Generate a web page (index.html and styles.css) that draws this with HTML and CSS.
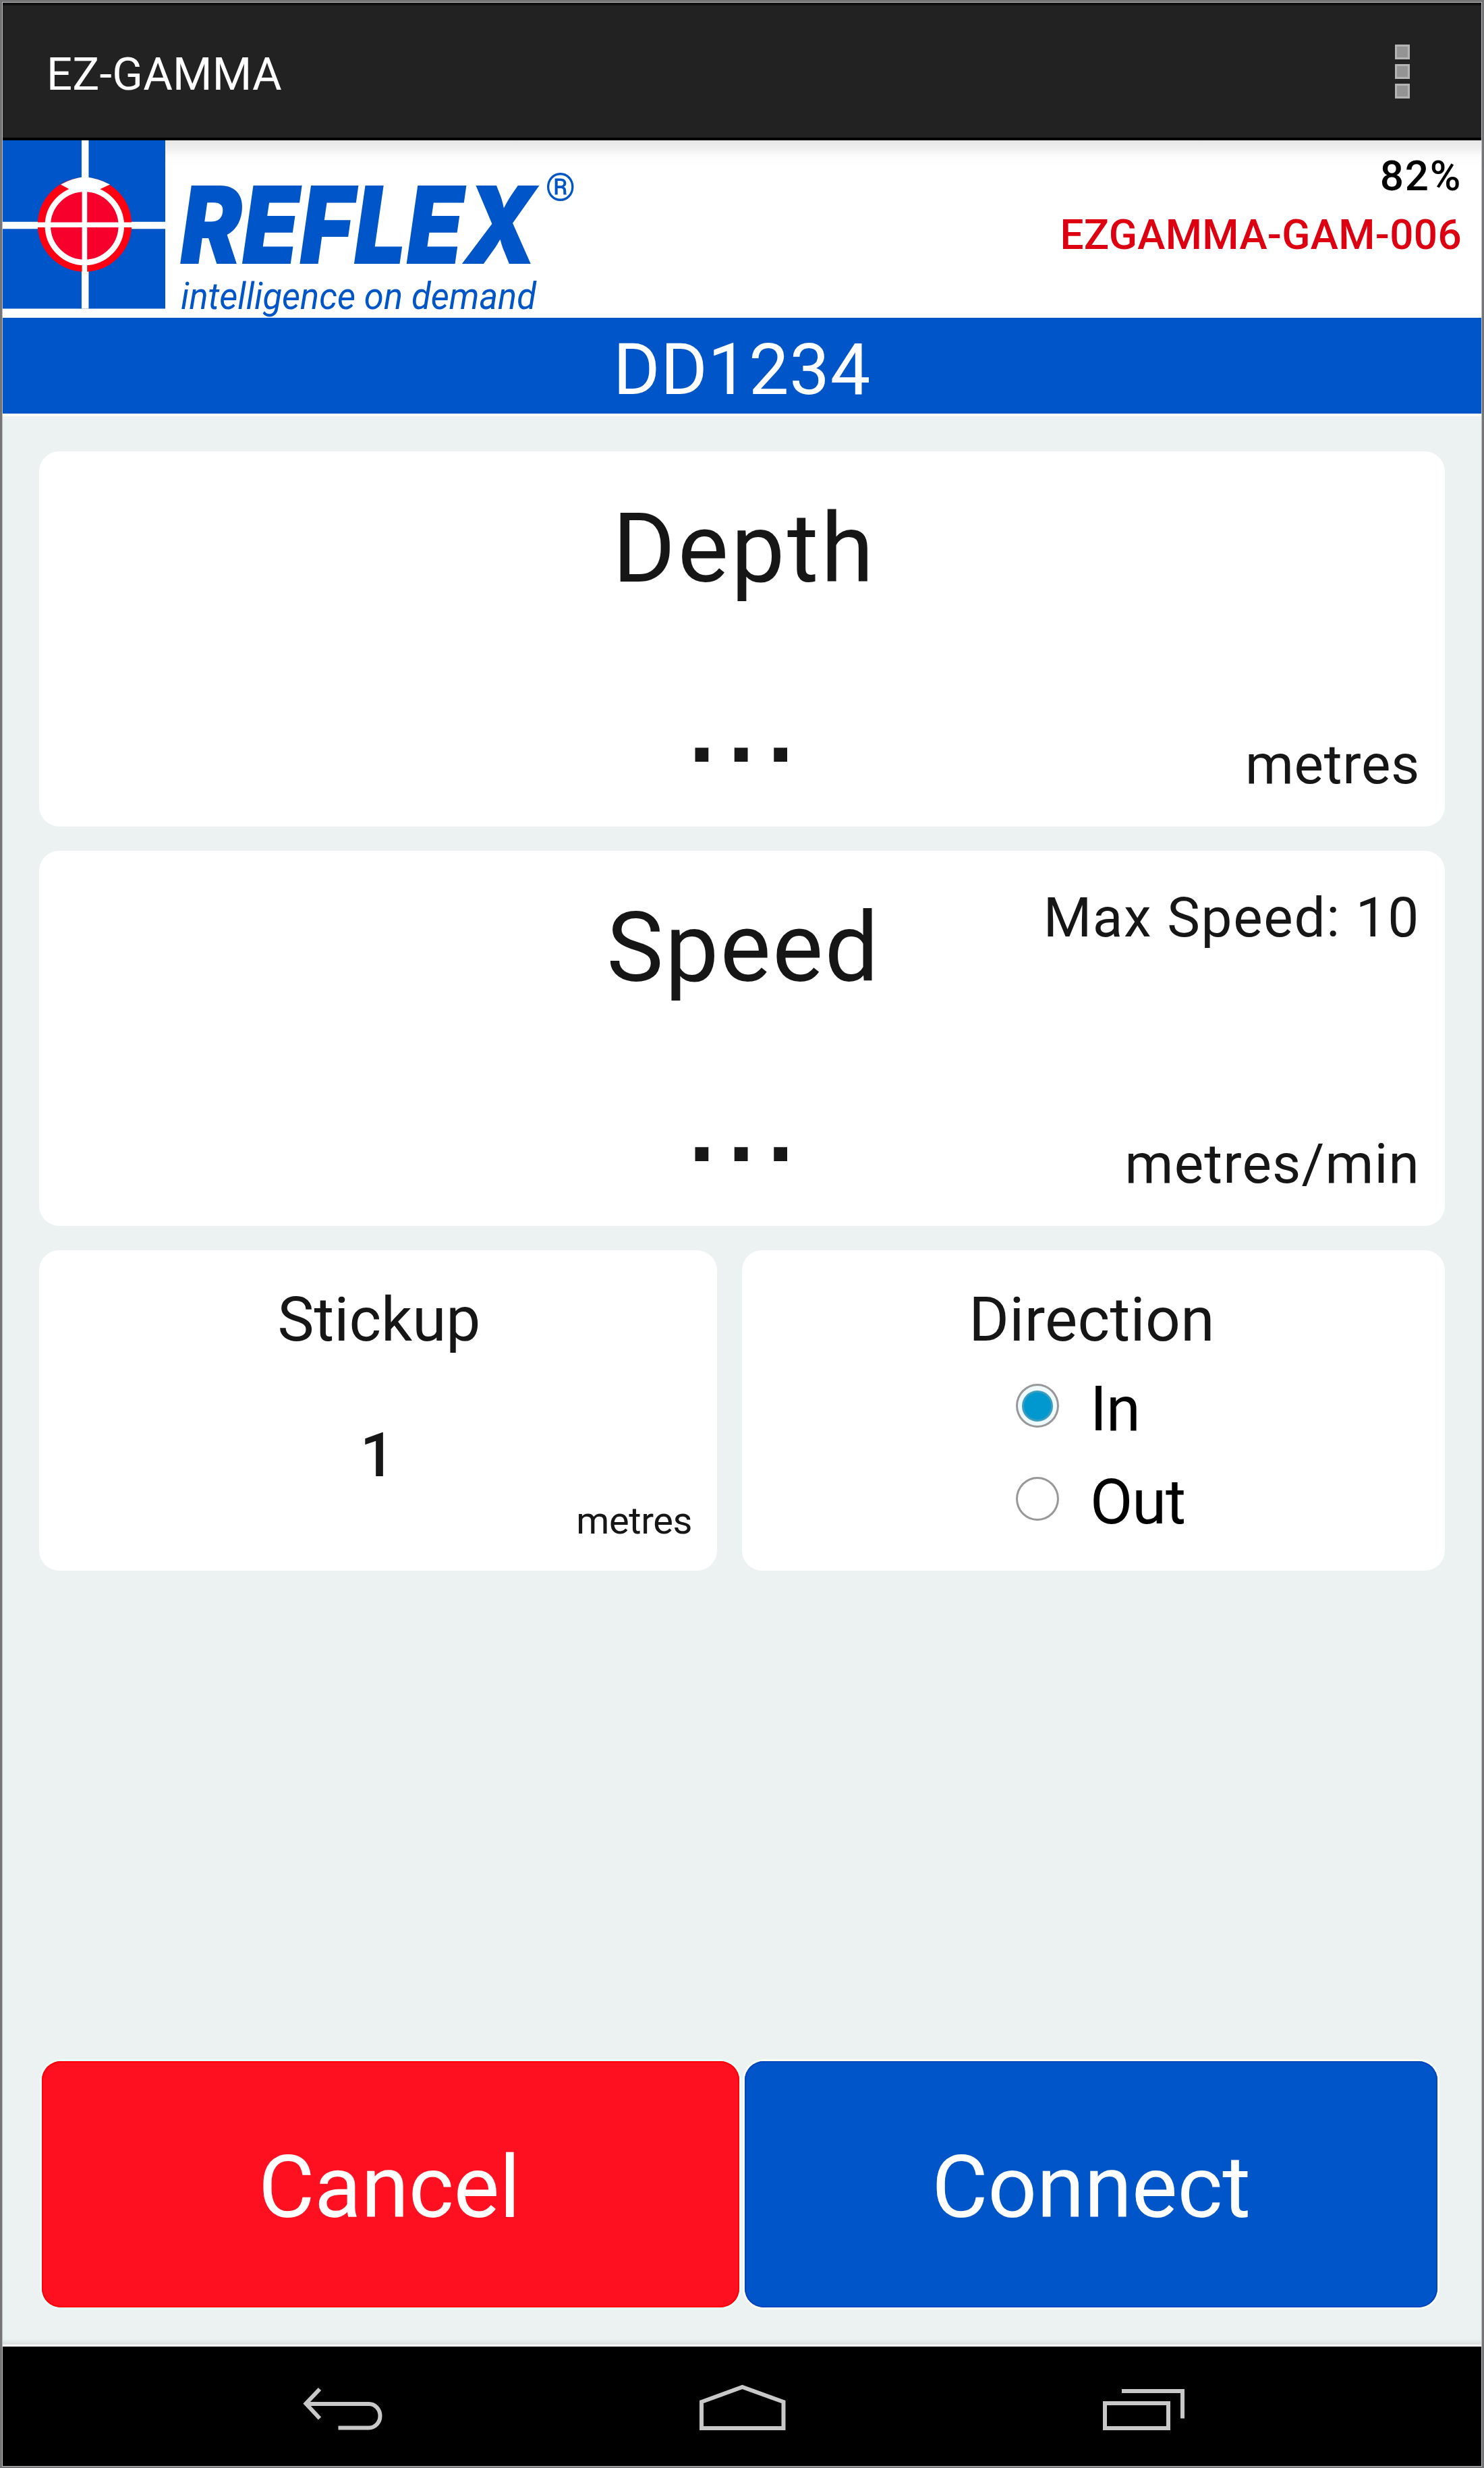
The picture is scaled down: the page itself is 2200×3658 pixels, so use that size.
FILE: index.html
```html
<!DOCTYPE html>
<html lang="en">
<head>
<meta charset="utf-8">
<title>EZ-GAMMA</title>
<link rel="stylesheet" href="styles.css">
</head>
<body>
<div class="device">
  <div class="screen">
    <header class="action-bar">
      <h1 class="app-name">EZ-GAMMA</h1>
      <div class="overflow"><i></i><i></i><i></i></div>
    </header>

    <section class="brand">
      <svg class="logo" viewBox="4 208 866 263" role="img" aria-label="REFLEX intelligence on demand">
        <rect x="4" y="208" width="241" height="249.500" fill="#0055c8"/>
        <path d="M126.200 208V457.500M4 334H245" stroke="#fff" stroke-width="10.500"/>
        <circle cx="125.500" cy="333" r="69.800" fill="#ff0012"/>
        <path d="M90 273.500Q107 264 125.500 262Q145 264 163 273.500L149 280Q125 292 102 280Z" fill="#fff"/>
        <circle cx="125.300" cy="334.500" r="54.500" fill="#f8002c" stroke="#fff" stroke-width="8.500"/>
        <path d="M125.400 262V405M55 333.300H197" stroke="#fff" stroke-width="7.600"/>
        <text class="logo-name" x="267" y="390.500" textLength="529" lengthAdjust="spacingAndGlyphs">REFLEX</text>
        <text class="logo-reg" x="808.500" y="296.500">®</text>
        <text class="logo-tag" x="268" y="457.500" textLength="527" lengthAdjust="spacingAndGlyphs">intelligence on demand</text>
      </svg>
      <div class="status">
        <span class="battery">82%</span>
        <span class="tool-id">EZGAMMA-GAM-006</span>
      </div>
    </section>

    <h2 class="hole-id">DD1234</h2>

    <main class="content">
      <section class="card">
        <h3 class="title title-depth">Depth</h3>
        <span class="reading">...</span>
        <span class="unit">metres</span>
      </section>
      <section class="card">
        <h3 class="title title-speed">Speed</h3>
        <span class="limit">Max Speed: 10</span>
        <span class="reading">...</span>
        <span class="unit unit-rate">metres/min</span>
      </section>
      <div class="pair">
        <section class="card">
          <h4 class="subtitle subtitle-stickup">Stickup</h4>
          <span class="stickup-value">1</span>
          <span class="unit-small">metres</span>
        </section>
        <section class="card">
          <h4 class="subtitle subtitle-direction">Direction</h4>
          <div class="options">
            <label class="option"><span class="radio radio-on"></span>In</label>
            <label class="option"><span class="radio"></span>Out</label>
          </div>
        </section>
      </div>
      <div class="actions">
        <button class="btn btn-cancel">Cancel</button>
        <button class="btn btn-connect">Connect</button>
      </div>
    </main>

    <nav class="nav-bar">
      <svg width="118" height="76" viewBox="449 3530 118 76">
        <path class="stroke" stroke-width="6" d="M454 3563H547A16.500 17.750 0 0 1 547 3598.500H501.500"/>
        <path class="stroke" stroke-width="6" d="M474 3541L453.500 3562.500L474 3584.500"/>
      </svg>
      <svg width="128" height="76" viewBox="1036 3530 128 76">
        <path class="stroke" stroke-width="6" d="M1039 3599V3560L1099.500 3538L1160.500 3560V3599Z"/>
      </svg>
      <svg width="122" height="76" viewBox="1635 3530 122 76">
        <path class="stroke" stroke-width="6" d="M1638 3562H1732V3599H1638ZM1663 3544H1753V3584.500"/>
      </svg>
    </nav>
  </div>
</div>
</body>
</html>
```
FILE: styles.css
```css
* { box-sizing: border-box; margin: 0; padding: 0; }

body {
  width: 2200px;
  font-family: Roboto, "Liberation Sans", sans-serif;
  font-weight: 400;
  color: #161616;
  background: #fff;
}

.device {
  width: 2200px;
  height: 3658px;
  border: 3px solid #757577;
  border-bottom-width: 2px;
}

.screen {
  height: 100%;
  display: flex;
  flex-direction: column;
  border: 1px solid #bdbdbd;
  background: #ecf2f2;
}

h1, h2, h3, h4 { font-weight: 400; }

/* Top action bar */
.action-bar {
  height: 204px;
  flex: none;
  display: flex;
  justify-content: space-between;
  align-items: center;
  padding: 0 106px 0 65px;
  background: #222;
  border-top: 4px solid #101010;
  border-bottom: 4px solid #000;
}

.app-name {
  padding-top: 8px;
  font-size: 67px;
  line-height: 1;
  letter-spacing: 0.2px;
  color: #fff;
}

.overflow { display: grid; gap: 6.500px; }

.overflow i {
  width: 22px;
  height: 22.500px;
  background: #949494;
  border: 3px solid #b4b4b4;
}

/* Logo and tool status */
.brand {
  height: 263px;
  flex: none;
  display: flex;
  justify-content: space-between;
  background: linear-gradient(#e6e6e6, #f2f2f2 14px, #fcfcfc 24px, #fff 40px);
}

.logo { width: 866px; height: 263px; flex: none; overflow: visible; }
.logo text { fill: #0055c8; }
.logo-name { font: italic 900 160px Inter, sans-serif; }
.logo-reg { font: 500 57px Roboto, sans-serif; }
.logo-tag { font: italic 400 56px Roboto, sans-serif; }

.status {
  display: flex;
  flex-direction: column;
  align-items: flex-end;
  padding: 8.500px 29px 0 0;
  font-size: 62px;
  font-weight: 500;
  line-height: 87.500px;
}

.battery { letter-spacing: 1.700px; color: #000; }
.tool-id { letter-spacing: 0.340px; color: #dc0010; }

.hole-id {
  height: 142px;
  flex: none;
  font-size: 106px;
  line-height: 155px;
  letter-spacing: 0.800px;
  text-align: center;
  color: #fff;
  background: #0055c8;
}

/* Cards */
.content {
  flex: 1;
  display: flex;
  flex-direction: column;
  gap: 36px;
  padding: 52px 54px 55px;
  border-top: 4px solid #fcfdf6;
  border-bottom: 3px solid #fff;
  box-shadow: inset 0 -8px 6px -4px #d6dddc;
}

.card {
  display: grid;
  height: 556px;
  flex: none;
  background: #fff;
  border-radius: 30px;
}

.card > * {
  grid-area: 1 / 1;
  align-self: start;
  line-height: 1;
}

.title { justify-self: center; margin-top: 74px; font-size: 142px; }
.title-depth { padding-left: 7px; letter-spacing: 3.600px; }
.title-speed { padding-left: 4px; letter-spacing: 2.200px; }

.reading {
  justify-self: center;
  margin-top: 342px;
  padding-left: 17px;
  font-family: "Liberation Sans", sans-serif;
  font-size: 140px;
  font-weight: 700;
  letter-spacing: 19.400px;
}

.unit, .limit { justify-self: end; margin-right: 37px; font-size: 82px; }
.unit { margin-top: 423px; letter-spacing: 0.650px; }
.unit-rate { letter-spacing: 1.140px; }
.limit { margin-top: 58px; letter-spacing: 1.600px; }

.pair {
  display: grid;
  grid-template-columns: 1005px 1042px;
  gap: 37px;
}

.pair .card { height: 475px; }

.subtitle { justify-self: center; margin-top: 58px; font-size: 91px; }
.subtitle-stickup { padding-left: 3px; }
.subtitle-direction { padding-right: 5px; letter-spacing: 0.310px; }

.stickup-value {
  justify-self: center;
  margin-top: 259px;
  padding-right: 2px;
  font-size: 91px;
  font-weight: 500;
}

.unit-small {
  justify-self: end;
  margin: 373px 37px 0 0;
  font-size: 56px;
  letter-spacing: -0.400px;
}

.options { margin: 190px 0 0 406px; }

.option {
  display: flex;
  align-items: flex-start;
  gap: 46px;
  height: 138px;
  font-size: 92px;
  line-height: 1;
  letter-spacing: -1px;
  color: #000;
}

.radio {
  width: 64px;
  height: 65px;
  margin-top: 8px;
  display: grid;
  place-items: center;
  border: 3px solid #989898;
  border-radius: 50%;
  background: #fff;
}

.radio-on { background: #effaff; }

.radio-on::after {
  content: "";
  width: 40px;
  height: 40px;
  border-radius: 50%;
  background: #0098cf;
  border: 3px solid #3d9dbf;
}

/* Bottom buttons */
.actions {
  display: grid;
  grid-template-columns: 1034px 1027px;
  gap: 8px;
  margin: auto 0 0 4px;
}

.btn {
  height: 365px;
  border: 0;
  border-radius: 28px;
  font: 400 128px/1 Roboto, sans-serif;
  letter-spacing: -0.250px;
  color: #fff;
}

.btn-cancel {
  padding: 8px 4px 0 0;
  background: #ff1020;
  box-shadow: 0 0 0 3px #e8fdfc, inset 0 0 0 2px #ff0008;
}

.btn-connect {
  padding: 8px 0 0;
  background: #0055c8;
  box-shadow: 0 0 0 3px #fbfcf3, inset 0 0 0 2px #0046c0;
}

/* System navigation */
.nav-bar {
  height: 177px;
  flex: none;
  display: flex;
  gap: 470px;
  padding: 52px 0 0 445px;
  background: #000;
}

.stroke { fill: none; stroke: #c8c8c8; }
```
